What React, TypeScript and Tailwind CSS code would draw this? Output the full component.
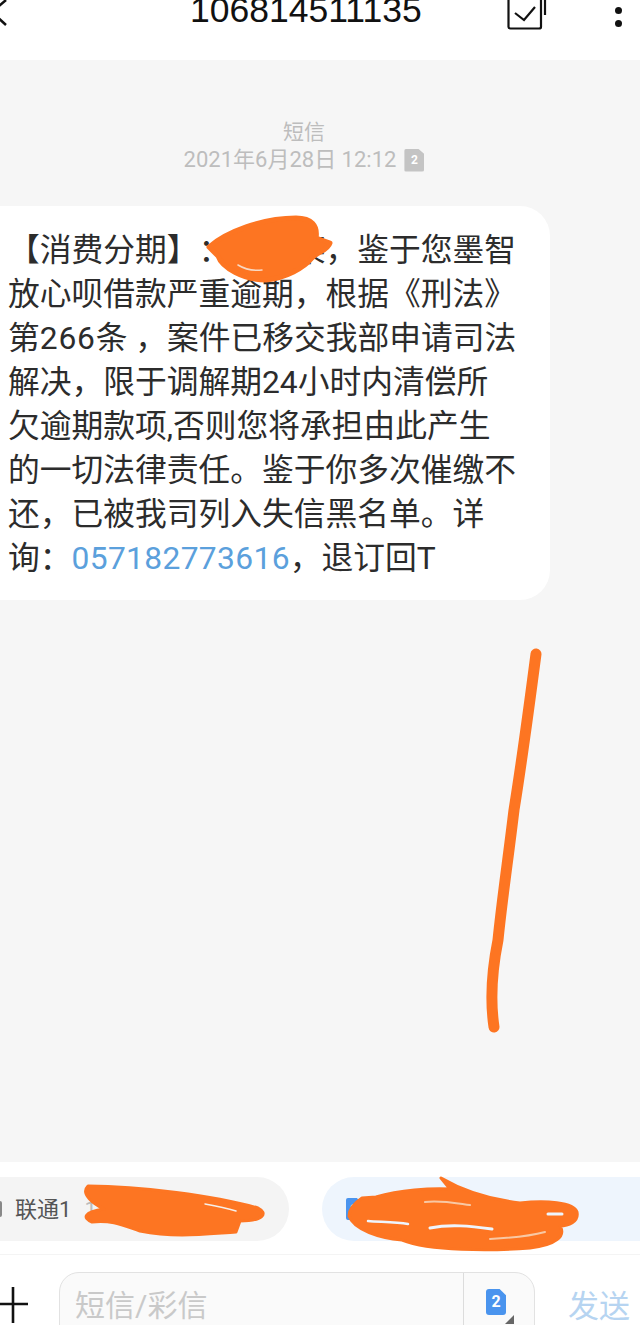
import React from "react";

const cjk = "font-['Roboto','Noto_Sans_CJK_SC',sans-serif] [text-spacing-trim:space-all]";

// Small SIM-card glyph with its slot number
function SimIcon({ color, className }: { color: string; className: string }) {
  return (
    <span
      className={`flex shrink-0 items-center justify-center font-bold text-white ${className}`}
      style={{ backgroundColor: color, clipPath: "polygon(0 0, 68% 0, 100% 24%, 100% 100%, 0 100%)" }}
    >
      2
    </span>
  );
}

// Hand-drawn marker strokes that cover private details on the page
function MarkerOverlay() {
  return (
    <svg className="absolute left-0 top-0 pointer-events-none" width="640" height="1325" fill="none" stroke="#fd7522" strokeLinecap="round" strokeLinejoin="round">
      {/* over the sender's name */}
      <path
        d="M209 247 C226 232 262 218 296 218 C312 218 318 226 316 238 L330 243 C328 250 318 252 312 258 C304 268 286 278 266 280 C244 280 222 268 218 256 Z"
        fill="#fd7522"
        strokeWidth="5"
      />
      <path d="M238 265 C246 270 254 271 262 270" stroke="#f8d9c4" strokeWidth="1.5" />
      {/* long vertical line */}
      <path d="M536 654 C530 700 522 760 514 810 C508 860 502 900 498 940 C492 970 490 1000 494 1027" strokeWidth="11" />
      {/* left carrier chip */}
      <path
        d="M88 1186 C140 1186 215 1196 258 1208 C268 1213 264 1221 240 1221 L236 1232 C205 1234 175 1238 140 1231 C120 1224 110 1220 92 1222 C82 1218 84 1212 104 1209 C94 1204 80 1194 88 1186 Z"
        fill="#fd7522"
        strokeWidth="3"
      />
      <path d="M205 1204 C216 1206 226 1208 236 1211" stroke="#f6efe9" strokeWidth="1.5" />
      {/* right carrier chip */}
      <path
        d="M441 1178 C465 1192 495 1200 520 1203 C545 1200 574 1202 577 1212 C579 1222 568 1226 560 1226 C566 1236 556 1245 530 1248 C490 1251 430 1251 402 1240 C380 1238 354 1230 349 1216 C349 1208 356 1202 362 1198 L376 1197 C400 1190 430 1188 450 1189 Z"
        fill="#fd7522"
        strokeWidth="3"
      />
      <path d="M368 1221 C380 1222 395 1222 408 1224" stroke="#eef5fd" strokeWidth="2.5" />
      <path d="M430 1228 C450 1224 470 1226 492 1229" stroke="#eef5fd" strokeWidth="3" />
      <path d="M425 1202 C440 1200 455 1203 470 1205" stroke="#f8c8a4" strokeWidth="2" />
      <path d="M490 1239 C510 1238 530 1236 545 1232" stroke="#f8c8a4" strokeWidth="2" />
      <path d="M548 1214 L562 1214" stroke="#eef5fd" strokeWidth="3" />
    </svg>
  );
}

export default function App() {
  return (
    <div className={`relative flex h-[1325px] w-[640px] flex-col overflow-hidden bg-white ${cjk}`}>
      {/* top bar, scrolled slightly out of the frame */}
      <header className="flex h-[60px] shrink-0 items-start bg-white">
        <svg className="ml-[-14px] mt-[-4px] shrink-0" width="24" height="34" viewBox="0 0 24 34" fill="none" stroke="#111" strokeWidth="2.5">
          <path d="M20 4 L6 16 L20 29" />
        </svg>
        <div className="ml-[180px] mt-[-10px] w-[232px] shrink-0 whitespace-nowrap font-['Liberation_Sans'] text-[35.5px] leading-[40px] text-[#111]">106814511135</div>
        <svg className="ml-[85px] mt-[-6px] shrink-0" width="44" height="36" viewBox="0 0 44 36" fill="none" stroke="#111" strokeWidth="2.2">
          <path d="M1.5 6 V33 Q1.5 34.5 3.5 34.5 H32 Q34 34.5 34 33 V6" strokeLinecap="round" />
          <path d="M38 4 V21" />
          <path d="M8 19 L17 26 L28 13" />
        </svg>
        <div className="ml-[64px] mt-[7px] flex shrink-0 flex-col gap-[6px]">
          <span className="h-[7px] w-[7px] rounded-full bg-[#111]" />
          <span className="h-[7px] w-[7px] rounded-full bg-[#111]" />
        </div>
      </header>

      {/* conversation */}
      <main className="flex h-[1102px] shrink-0 flex-col bg-[#f6f6f6]">
        <div className="mt-[59px] flex w-[608px] flex-col items-center text-[#bdbdbd]">
          <div className="text-[21px] leading-[26px]">短信</div>
          <div className="mt-[1px] flex items-center gap-[8px] text-[22px] leading-[28px]">
            <span>2021年6月28日 12:12</span>
            <SimIcon color="#c4c4c4" className="h-[23px] w-[20px] rounded-[2px] text-[12px]" />
          </div>
        </div>
        <div className="ml-[-40px] mt-[32px] h-[394px] w-[590px] shrink-0 rounded-[30px] bg-white pl-[48px] pt-[23px] text-[31.75px] leading-[44px] text-[#2c2c2c]">
          <div className="whitespace-nowrap">【消费分期】：某某某，鉴于您墨智</div>
          <div className="whitespace-nowrap">放心呗借款严重逾期，根据《刑法》</div>
          <div className="whitespace-nowrap">第<span className="tracking-[0.8px]">266</span>条 ，案件已移交我部申请司法</div>
          <div className="whitespace-nowrap">解决，限于调解期24小时内清偿所</div>
          <div className="whitespace-nowrap">欠逾期款项,否则您将承担由此产生</div>
          <div className="whitespace-nowrap">的一切法律责任。鉴于你多次催缴不</div>
          <div className="whitespace-nowrap">还，已被我司列入失信黑名单。详</div>
          <div className="whitespace-nowrap">询：<span className="tracking-[0.35px] text-[#5ba0dc]">057182773616</span>，退订回T</div>
        </div>
      </main>

      {/* SIM picker chips */}
      <section className="flex h-[93px] shrink-0 items-start border-b border-[#f4f4f4] bg-white pt-[15px]">
        <div className="ml-[-40px] flex h-[64px] w-[329px] shrink-0 items-center rounded-full bg-[#f4f4f4] pl-[38px] text-[22px] text-[#555]">
          <span className="h-[16px] w-[4px] rounded-r-[2px] bg-[#888]" />
          <span className="ml-[13px]">联通1</span>
          <span className="ml-[13px] text-[#bbb]">18</span>
        </div>
        <div className="ml-[33px] flex h-[64px] w-[360px] shrink-0 items-center rounded-full bg-[#eef5fd] pl-[24px]">
          <SimIcon color="#4a94ee" className="h-[22px] w-[16px] rounded-[2px] text-[13px]" />
        </div>
      </section>

      {/* composer */}
      <footer className="flex flex-1 items-start">
        <svg className="ml-[-2px] mt-[32px] shrink-0" width="30" height="36" viewBox="0 0 30 36" fill="none" stroke="#111" strokeWidth="2.6">
          <path d="M15 0 V36 M0 17 H30" />
        </svg>
        <div className="ml-[31px] mt-[17px] flex h-[80px] w-[476px] shrink-0 rounded-[20px] border border-[#e2e2e2] bg-[#fafafa]">
          <div className="flex-1 pl-[15px] pt-[13px] text-[30px] leading-[40px] text-[#c9c9c9]">短信/彩信</div>
          <div className="relative w-[71px] border-l border-[#dcdcdc]">
            <SimIcon color="#4a94ee" className="absolute left-[22px] top-[16px] h-[26px] w-[20px] rounded-[3px] text-[16px]" />
            <span className="absolute left-[41px] top-[42px] h-0 w-0 border-b-[9px] border-l-[9px] border-b-[#666] border-l-transparent" />
          </div>
        </div>
        <div className="ml-[33px] mt-[30px] shrink-0 whitespace-nowrap text-[31px] leading-[44px] text-[#b6d4f1]">发送</div>
      </footer>

      <MarkerOverlay />
    </div>
  );
}
